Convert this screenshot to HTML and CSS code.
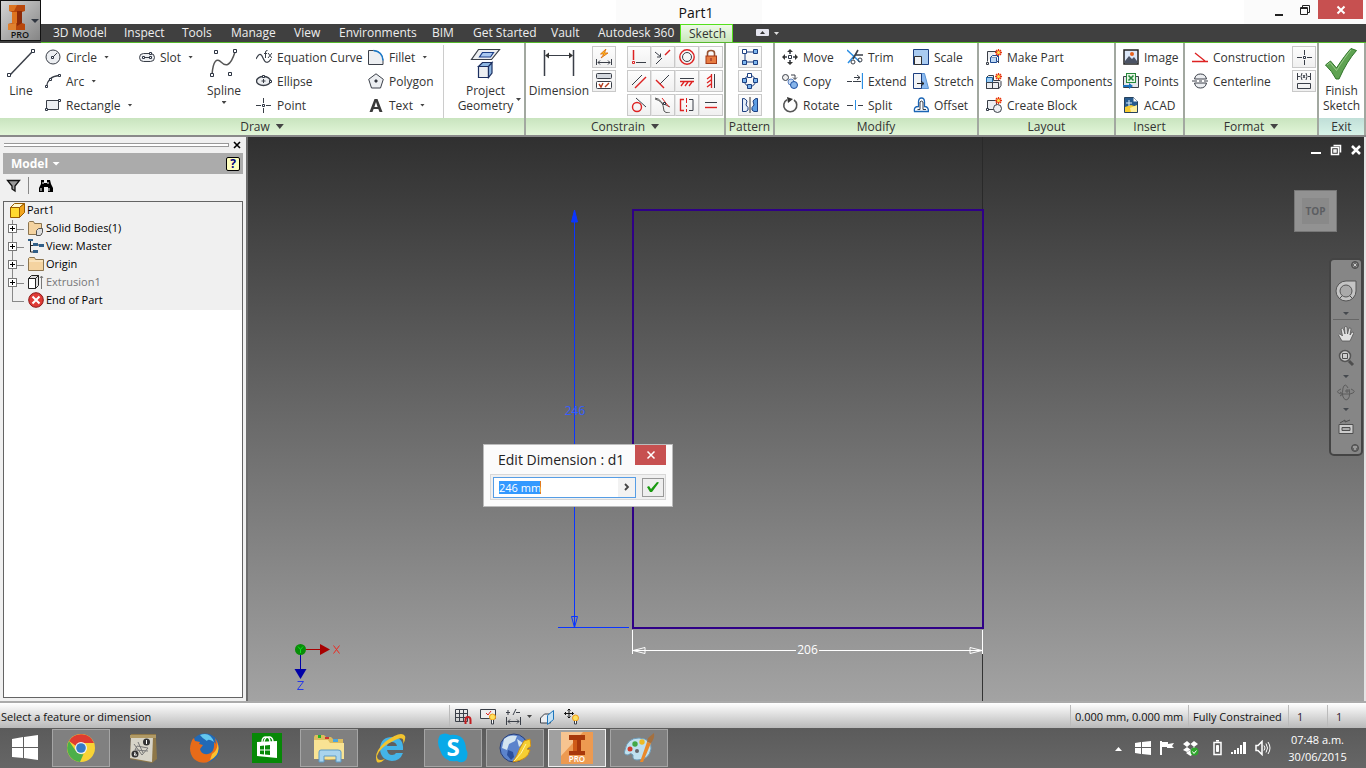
FILE: index.html
```html
<!DOCTYPE html>
<html lang="en">
<head>
<meta charset="utf-8">
<title>Part1</title>
<link rel="stylesheet" href="styles.css">
</head>
<body>
<div class="app">
<header class="top">
  <button class="appbtn" aria-label="Application menu">
    <svg width="39" height="39" viewBox="0 0 39 39"><path d="M8 4h16v6l-3 1v11l3 1v6H7v-6l4-1V11L8 10z" fill="#b8470b"/><path d="M8 4h8l-3 6H8zM11 11h5v11h-5z" fill="#dd7420"/><path d="M16 10h5v12l-5 3z" fill="#8c2a08"/><path d="M7 23l8-1v7H7z" fill="#e0812e"/><path d="M30 18h8l-4 4z" fill="#303640"/><text x="19" y="37" class="pro">PRO</text></svg>
  </button>
  <div class="titlebar">
    <h1 class="title">Part1</h1>
    <div class="winbtns">
      <button aria-label="Minimize"><svg width="12" height="12"><path d="M2 10h8v2H2z" fill="#222"/></svg></button>
      <button aria-label="Restore"><svg width="12" height="12" fill="none" stroke="#222"><path d="M1.500 3.500h7v7h-7zM1 4.500h8M3.500 3v-1.500h7v7H9"/></svg></button>
      <button class="close" aria-label="Close"><svg width="10" height="10"><path d="M1.500 1.500l7 7M8.500 1.500l-7 7" stroke="#fff" stroke-width="2"/></svg></button>
    </div>
  </div>
  <nav class="tabs">
    <a href="#">3D Model</a><a href="#">Inspect</a><a href="#">Tools</a><a href="#">Manage</a><a href="#">View</a><a href="#">Environments</a><a href="#">BIM</a><a href="#">Get Started</a><a href="#">Vault</a><a href="#">Autodesk 360</a><a href="#" class="on">Sketch</a>
    <button class="ribmin" aria-label="Minimize ribbon"><svg width="26" height="8"><rect width="13" height="7" rx="1" fill="#e4e4ee"/><path d="M4 5l2.500-3L9 5z" fill="#333"/><path d="M18 3h5l-2.500 3z" fill="#ddd"/></svg></button>
  </nav>
</header>

<section class="ribbon">
  <div class="panel p-draw">
    <div class="tools">
      <button class="big"><svg class="i" width="32" height="32"><path d="M5 27L27 4" stroke-width="1.500"/><path class="n" d="M2.500 25.500h3v3h-3zM26.500 1.500h3v3h-3z"/></svg><span>Line</span></button>
      <div class="col">
        <button class="tool"><svg class="i g" width="16" height="16"><circle cx="8" cy="8" r="7"/><path d="M8 8l4-4"/><path class="n" d="M6.500 7.500h2v2h-2z"/></svg>Circle<i class="dd"></i></button>
        <button class="tool"><svg class="i" width="16" height="16"><path d="M1.500 14C2 8 6 3 14 2.500" stroke-width="1.500"/><path class="n" d="M.5 12.500h2v2h-2zM4.500 5.500h2v2h-2zM13.500 1.500h2v2h-2z"/></svg>Arc<i class="dd"></i></button>
        <button class="tool"><svg class="i g" width="16" height="16"><path d="M1.500 3.500h12v9h-12z"/><path class="n" d="M.5 11.500h2v2h-2zM13.500 2.500h2v2h-2z"/></svg>Rectangle<i class="dd"></i></button>
      </div>
      <div class="col">
        <button class="tool"><svg class="i g" width="16" height="16"><rect x=".5" y="4.500" width="15" height="8" rx="4"/><path d="M5 8.500h6"/><path class="n" d="M3.500 7.500h2v2h-2zM10.500 7.500h2v2h-2zM10.500 3.500h2v2h-2z"/></svg>Slot<i class="dd"></i></button>
      </div>
      <button class="big"><svg class="i" width="32" height="32"><path d="M4 27C5 12 9 10 13 14s9 6 14-10" stroke="#555" stroke-width="1.500"/><path class="n" d="M2.500 25.500h3v3h-3zM6.500 2.500h3v3h-3zM20.500 24.500h3v3h-3zM25.500 1.500h3v3h-3z"/></svg><span>Spline</span><i class="dd"></i></button>
      <div class="col">
        <button class="tool"><svg class="i" width="16" height="16"><path d="M0 10C3 4 5 4 7 9s5 6 8 1" stroke-width="1.200"/><path d="M9.500 9V3q0-1.500 2-1.500M8 4.500h3M12 4l4 5M16 4l-4 5"/></svg>Equation Curve</button>
        <button class="tool"><svg class="i g" width="16" height="16"><ellipse cx="7.500" cy="8" rx="7" ry="4.500" stroke-width="1.400"/><path d="M5.500 8h4M7.500 6v4"/><path class="n" d="M6.500 2.500h2v2h-2zM13.500 7.500h2v2h-2z"/></svg>Ellipse</button>
        <button class="tool"><svg class="i" width="16" height="16"><path d="M0 8.500h5M10 8.500h5M7.500 1v5M7.500 11v5"/><path class="n" d="M6.500 7.500h2v2h-2z"/></svg>Point</button>
      </div>
      <div class="col">
        <button class="tool"><svg class="i g" width="16" height="16"><path d="M.5 15.500V1.500h5q9 1 9.500 10v4z"/><path d="M5.500 1.500q9 1 9.500 10" stroke="#1b79c9" stroke-width="1.500"/></svg>Fillet<i class="dd"></i></button>
        <button class="tool"><svg class="i g" width="16" height="16"><path d="M8 .8l7.300 5.500-2.800 8.700h-9L.7 6.300z"/><path d="M7 7h2v2H7z" fill="#222"/></svg>Polygon</button>
        <button class="tool"><svg width="16" height="16"><path d="M6.500 2h3L14.500 15h-3l-1.200-3H5.600l-1.100 3h-3zM8 5L6.400 10h3.200z" fill="#3a3a3a" fill-rule="evenodd"/></svg>Text<i class="dd"></i></button>
      </div>
      <button class="big sep"><svg class="i g" width="32" height="32" stroke-width="1.200"><path d="M8.500 1.500h21l-8 10h-20z"/><path d="M12.500 4.500h11l-3 4.500h-11z" fill="#a9c8f0" stroke="#1c3f88"/><path d="M8.500 18.500h10v11h-10z" stroke="#1c2f60"/><path d="M8.500 18.500l4-4h9.500l-3.500 4zM18.500 18.500l3.500-4v10.500l-3.500 4.500z" fill="#8db6e2" stroke="#1c2f60"/></svg><span>Project<br>Geometry</span><i class="dd over"></i></button>
    </div>
    <h2 class="lab">Draw<i class="dl"></i></h2>
  </div>

  <div class="panel p-con">
    <div class="tools">
      <button class="big"><svg class="i" width="32" height="32"><path d="M1.500 2v26M30.500 2v26" stroke-width="1.500"/><path d="M3 7.500h26"/><path d="M2 7.500l4-3v6zM30 7.500l-4-3v6z" fill="#333" stroke="none"/></svg><span>Dimension</span></button>
      <div class="sqs">
        <button class="sq" aria-label="Automatic dimension"><svg class="i" width="16" height="16"><path d="M10 0L4.500 5H8L5 9l7-5H8.500z" fill="#ffbe21" stroke="#d9650b" stroke-width=".8"/><path d="M.5 10v6M15.500 10v6M2 13.500h12M4 11.500l-2 2 2 2M12 11.500l2 2-2 2"/></svg></button>
        <button class="sq" aria-label="Show constraints"><svg class="i" width="16" height="16"><rect x=".5" y=".5" width="15" height="5" rx="1" fill="#d5d9df"/><rect x=".5" y="8.500" width="15" height="7" rx="1" fill="#fff"/><path d="M3 11l2 3 2-4M9 14l4-4" stroke="#b43c1c" stroke-width="1.400"/></svg></button>
      </div>
      <div class="sqs three joined">
        <button class="sq" aria-label="Perpendicular"><svg class="i" width="16" height="16"><path d="M2.500 1v10" stroke="#d22" stroke-width="1.500"/><path d="M1.500 12.500h2v2h-2z" stroke="#d22"/><path d="M5 13.500h10"/></svg></button>
        <button class="sq" aria-label="Coincident"><svg class="i" width="16" height="16"><path d="M10 6l5-5" stroke="#d22" stroke-width="1.400"/><path d="M1 15l6-6M0 3l6 5M5.500 4.500V8H2"/></svg></button>
        <button class="sq" aria-label="Concentric"><svg class="i" width="16" height="16"><circle cx="8" cy="8" r="7.200" stroke="#d22" stroke-width="1.400"/><circle cx="8" cy="8" r="4.500"/></svg></button>
        <button class="sq" aria-label="Fix"><svg class="i" width="16" height="16"><path d="M4.500 8V4q0-2.500 3.500-2.500T11.500 4v4" stroke="#955232" stroke-width="1.600"/><rect x="3" y="7" width="10.500" height="7.500" fill="#e67c42" stroke="#a53917"/><path d="M8 9v3" stroke="#822"/></svg></button>
        <button class="sq" aria-label="Parallel"><svg class="i" width="16" height="16"><path d="M1 12L11 2"/><path d="M4 15L15 4" stroke="#d22" stroke-width="1.400"/></svg></button>
        <button class="sq" aria-label="Square to line"><svg class="i" width="16" height="16"><path d="M5 11l9-9"/><path d="M1 7l8 8" stroke="#d22" stroke-width="1.400"/></svg></button>
        <button class="sq" aria-label="Horizontal"><svg class="i" width="16" height="16"><path d="M1 5.500h14"/><path d="M1 8.500h14M5 9l-3 4M9 9l-3 4M13 9l-3 4" stroke="#d22" stroke-width="1.300"/></svg></button>
        <button class="sq" aria-label="Vertical"><svg class="i" width="16" height="16"><path d="M11.500 1v14"/><path d="M8.500 1v14M8 3L4 6M8 7l-4 3M8 11l-4 3" stroke="#d22" stroke-width="1.300"/></svg></button>
        <button class="sq" aria-label="Tangent"><svg class="i" width="16" height="16"><circle cx="6" cy="10" r="4.500" stroke="#d22" stroke-width="1.400"/><path d="M5 1l10 9"/></svg></button>
        <button class="sq" aria-label="Smooth"><svg class="i" width="16" height="16"><path d="M0 1q8 1 9 13 1 2 6 2M0 2q4 1 7 4l8 4" stroke="#555"/><path d="M7 1l7 9" stroke="#d22"/><path class="n" d="M8.500 5.500h2v2h-2z"/></svg></button>
        <button class="sq" aria-label="Symmetric"><svg class="i" width="16" height="16"><path d="M5 2.500H1.500v11H5" stroke="#d22" stroke-width="1.400"/><path d="M7.500 1v5M7.500 8v2M7.500 12v3" stroke="#d22"/><path d="M10 2.500h4v11h-4"/></svg></button>
        <button class="sq" aria-label="Equal"><svg class="i" width="16" height="16"><path d="M2 5.500h12"/><path d="M2 10.500h12" stroke="#d22" stroke-width="1.400"/></svg></button>
      </div>
    </div>
    <h2 class="lab">Constrain<i class="dl"></i></h2>
  </div>

  <div class="panel p-pat">
    <div class="tools">
      <div class="sqs">
        <button class="sq" aria-label="Rectangular pattern"><svg class="i b" width="16" height="16"><path d="M3 3h10M3 3v10M3 13h10"/><path d="M.5 .5h4v4h-4z" fill="#fff"/><path d="M11.500 .5h4v4h-4zM.5 11.500h4v4h-4zM11.500 11.500h4v4h-4z" fill="#7db6ee"/></svg></button>
        <button class="sq" aria-label="Circular pattern"><svg class="i b" width="16" height="16"><circle cx="8" cy="8" r="5.500"/><path d="M5.500 .5h4v4h-4z" fill="#fff"/><path d="M.5 5.500h4v4h-4zM11.500 5.500h4v4h-4zM5.500 11.500h4v4h-4z" fill="#7db6ee"/></svg></button>
        <button class="sq" aria-label="Mirror"><svg class="i b" width="16" height="16"><path d="M.5 1.500v13H4q3-1 2-4L4 8l1-4q-2-3-4-2.500z" fill="#e5eef8"/><path d="M8 0v16" stroke="#333"/><path d="M15.500 1.500v13H12q-3-1-2-4L12 8l-1-4q2-3 4-2.500z" fill="#5d9ee4"/></svg></button>
      </div>
    </div>
    <h2 class="lab">Pattern</h2>
  </div>

  <div class="panel p-mod">
    <div class="tools">
      <div class="col">
        <button class="tool"><svg class="i" width="16" height="16"><path d="M8 2v3M8 11v3M2 8h3M11 8h3" stroke-width="1.600"/><path d="M8 0l3 3H5zM8 16l3-3H5zM0 8l3-3v6zM16 8l-3-3v6z" fill="#333" stroke="none"/><path class="n" d="M6.500 6.500h3v3h-3z"/></svg>Move</button>
        <button class="tool"><svg class="i" width="16" height="16"><circle cx="3.500" cy="4.500" r="3" fill="#eee"/><path d="M9 2h4v4M11 4.500l2 2 2-2"/><circle cx="9" cy="9" r="3" fill="#c9dcf4" stroke="#5f83c1"/><circle cx="12" cy="12" r="3.500" fill="#86b4ea" stroke="#1e50a0"/></svg>Copy</button>
        <button class="tool"><svg class="i" width="16" height="16"><path d="M12 3a6.500 6.500 0 1 1-7-.3" stroke="#555" stroke-width="1.600"/><path d="M5 0l6 2-5 4z" fill="#333" stroke="none"/></svg>Rotate</button>
      </div>
      <div class="col">
        <button class="tool"><svg class="i" width="16" height="16"><path d="M0 1l13 12M1 14L8 6" stroke="#2a8ee4" stroke-width="1.500"/><path d="M11 1L6 10M8 6h8" stroke-width="1.600"/><circle cx="6" cy="13" r="2"/><circle cx="13" cy="11" r="2"/></svg>Trim</button>
        <button class="tool"><svg class="i" width="16" height="16"><path d="M0 8.500h5M6 8.500h8M7 4.500h6M10 2l3 2.500L10 7"/><path d="M15.500 0v16" stroke="#2a8ee4" stroke-width="1.300"/></svg>Extend</button>
        <button class="tool"><svg class="i" width="16" height="16"><path d="M0 8.500h6M11 8.500h5"/><path d="M8.500 3v10" stroke="#2a8ee4"/></svg>Split</button>
      </div>
      <div class="col">
        <button class="tool"><svg class="i b" width="16" height="16"><path d="M.5 .5h15v15H.5z" fill="#a9cbf1"/><path d="M1.500 7.500h7v8h-7z" fill="#f1f3f6" stroke="#333"/></svg>Scale</button>
        <button class="tool"><svg class="i b" width="16" height="16"><path d="M8 .5h3.500l4 15H8z" fill="#8bbaf0" stroke="#5c95d4"/><path d="M.5 .5h8v15h-8z" fill="#f1f3f6"/><path d="M4 10.500h7M8 8l3 2.500L8 13" stroke="#222"/></svg>Stretch</button>
        <button class="tool"><svg class="i" width="16" height="16"><path d="M1.500 14.500q-1-5 4-5V5q0-4 3-4t3 4v4.500q4 0 4 5z" stroke="#1b65b5" stroke-width="1.300"/><path d="M4.500 12.500H7V5q1-2 3 0v7.500h3"/></svg>Offset</button>
      </div>
    </div>
    <h2 class="lab">Modify</h2>
  </div>

  <div class="panel p-lay">
    <div class="tools">
      <div class="col">
        <button class="tool"><svg class="i g" width="16" height="16"><path d="M1.500 12.500v-10h9M.5 15.500h2v-2h-2zM12.500 8v6"/><path d="M4.500 8.500h6v5h-6z" fill="#bdd7f3" stroke="#1b4891"/><path d="M4.500 8.500l2-2h6l-2 2M12.500 6.500v5l-2 2" stroke="#1b4891"/><path d="M12.500 0v7M9 3.500h7M10 1l5 5M15 1l-5 5" stroke="#e73711" stroke-width="1.300"/><circle cx="12.500" cy="3.500" r="1.500" fill="#ffe14d" stroke="none"/></svg>Make Part</button>
        <button class="tool"><svg class="i g" width="16" height="16"><path d="M.5 4.500l2-2h5v5H14l1 1v4l-2 3H.5z"/><path d="M.5 4.500h6v5h-6z" fill="#9acbf4" stroke="#1b65a5"/><path d="M.5 9.500h6v6h-6zM6.500 9.500h6v6h-6z"/><path d="M12.500 0v7M9 3.500h7M10 1l5 5M15 1l-5 5" stroke="#e73711" stroke-width="1.300"/><circle cx="12.500" cy="3.500" r="1.500" fill="#ffe14d" stroke="none"/></svg>Make Components</button>
        <button class="tool"><svg class="i g" width="16" height="16"><path d="M1.500 3.500h9v9h-9z"/><circle cx="11.500" cy="11.500" r="4"/><path class="n" d="M.5 11.500h2v2h-2z"/><path d="M12.500 0v7M9 3.500h7M10 1l5 5M15 1l-5 5" stroke="#e73711" stroke-width="1.300"/><circle cx="12.500" cy="3.500" r="1.500" fill="#ffe14d" stroke="none"/></svg>Create Block</button>
      </div>
    </div>
    <h2 class="lab">Layout</h2>
  </div>

  <div class="panel p-ins">
    <div class="tools">
      <div class="col">
        <button class="tool"><svg width="16" height="16"><rect x="1" y="1" width="14" height="14" fill="#dce7f8" stroke="#222" stroke-width="1.500"/><path d="M2 12l4-5 3 3 2-2 3 4v2H2z" fill="#4b5365"/><circle cx="9" cy="5" r="2" fill="#e8611e"/></svg>Image</button>
        <button class="tool"><svg class="i" width="16" height="16"><path d="M3 3.500H.5v11h15v-11H13" fill="#e3e6ea"/><rect x="3.500" y=".5" width="9" height="9" fill="#e7f5e5" stroke="#25873b"/><path d="M5.500 2.500l5 5M10.500 2.500l-5 5" stroke="#25873b" stroke-width="1.600"/><path d="M0 12h6v-2l4 3-4 3v-2H0z" fill="#1a72bf" stroke="none"/></svg>Points</button>
        <button class="tool"><svg width="16" height="16"><path d="M1.500 .5h9l4 4v11h-13z" fill="#285b8e" stroke="#26415c"/><path d="M10.500 .5v4h4z" fill="#fff"/><path d="M2 10l6-2 6 2v5H2z" fill="#f6cc32"/><path d="M7 11l7-3v7H8z" fill="#fff09c"/><path d="M6 3v6M3 6h6" stroke="#d6efff"/></svg>ACAD</button>
      </div>
    </div>
    <h2 class="lab">Insert</h2>
  </div>

  <div class="panel p-for">
    <div class="tools">
      <div class="col">
        <button class="tool"><svg class="i" width="16" height="16"><path d="M0 12.500h16M3 4l10 8" stroke="#d22" stroke-width="1.300"/></svg>Construction</button>
        <button class="tool"><svg class="i g" width="16" height="16"><path d="M2.500 6q1-5 6-5t6 5zM2.500 10q1 5 6 5t6-5z"/><path d="M0 8h5M7 8h3M12 8h4"/></svg>Centerline</button>
      </div>
      <div class="sqs">
        <button class="sq" aria-label="Center point"><svg class="i" width="16" height="16"><path d="M1 8.500h5M11 8.500h5M8.500 1v5M8.500 11v5"/><path class="n" d="M7.500 7.500h2v2h-2z"/></svg></button>
        <button class="sq" aria-label="Driven dimension"><svg class="i" width="16" height="16"><path d="M1.500 0v7M14.500 0v7M1 3.500h3M12 3.500h3M6 0q-2 3.500 0 7M10 0q2 3.500 0 7M7 2l2 3M9 2L7 5M1.500 10.500h13v5h-13z"/></svg></button>
      </div>
    </div>
    <h2 class="lab">Format<i class="dl"></i></h2>
  </div>

  <div class="panel p-exit">
    <div class="tools">
      <button class="big"><svg width="32" height="32"><path d="M.5 17l5-4 6 7Q20 7 26 .5l5.500 2Q22 13 14 31H11Q7 23 .5 17z" fill="#5fa352" stroke="#2f7529"/><path d="M2 17l3-2.500 6.500 8Q20 9 26 2" fill="none" stroke="#9aca8a"/></svg><span>Finish<br>Sketch</span></button>
    </div>
    <h2 class="lab">Exit</h2>
  </div>
</section>

<main class="work">
  <aside class="browser">
    <div class="grip"><i></i><button aria-label="Close panel"><svg width="8" height="8"><path d="M1 1l6 6M7 1L1 7" stroke="#000" stroke-width="1.600"/></svg></button></div>
    <div class="mhead"><button class="mname">Model<i></i></button><button class="help" aria-label="Help">?</button></div>
    <div class="mtools">
      <button aria-label="Filter"><svg width="16" height="14"><path d="M1.500 1.500h12L9 7v5l-3-2V7z" fill="#999" stroke="#111" stroke-width="1.300"/></svg></button>
      <button class="find" aria-label="Find"><svg width="16" height="14"><path d="M3 1h3v3h3V1h3l1 4 2 4v4h-5V8H6v5H1V9l2-4z"/><path d="M3 9v3M11 9v3M5 3v2M10 3v2" stroke="#fff"/></svg></button>
    </div>
    <div class="tree">
      <ul>
        <li><svg width="16" height="16"><path d="M1.500 5.500h9v10h-9z" fill="#ffd92f" stroke="#985b00"/><path d="M1.500 5.500l4-4h10l-5 4z" fill="#fff8cf" stroke="#985b00"/><path d="M10.500 5.500l5-4v9l-5 5z" fill="#f2a51e" stroke="#985b00"/></svg>Part1</li>
        <li class="sub"><b class="ex"></b><svg width="16" height="16"><path d="M.5 14.500v-12l1-1h4l1 2h7v11z" fill="#f4d3a0" stroke="#8b744f"/><path d="M8.500 10.500l2-2h4v4l-2 3h-4z" fill="#ddd" stroke="#555"/></svg>Solid Bodies(1)</li>
        <li class="sub"><b class="ex"></b><svg width="16" height="16"><path d="M2.500 3v11h3M3 7.500h3M8 7h3" fill="none" stroke="#222"/><path d="M0 1h5v2H0zM5 5h5v3H5zM11 6h5v3h-5zM5 12h5v3H5z" fill="#315f88"/></svg>View: Master</li>
        <li class="sub"><b class="ex"></b><svg width="16" height="16"><path d="M.5 14.500v-12l1-1h5l1 2h8v11z" fill="#f4d3a0" stroke="#8b744f"/><path d="M1 5h14" stroke="#fff2d6"/></svg>Origin</li>
        <li class="sub dim"><b class="ex"></b><svg width="16" height="16" fill="#fff" stroke="#222"><path d="M.5 4.500h7v10h-7z"/><path d="M.5 4.500l3-3h7l-3 3zM7.500 4.500l3-3v10l-3 3z" fill="#ddd"/><path d="M13.500 15V2M12 4l1.500-2L15 4" stroke="#777"/></svg>Extrusion1</li>
        <li class="sub last"><svg width="16" height="16"><circle cx="8" cy="8" r="7.300" fill="#df3b36" stroke="#8d1616"/><path d="M4.500 4.500l7 7M11.500 4.500l-7 7" stroke="#fff" stroke-width="2"/></svg>End of Part</li>
      </ul>
    </div>
  </aside>

  <section class="view">
    <svg class="scene" viewBox="0 0 1116 564" preserveAspectRatio="xMidYMid meet" fill="none">
      <path d="M734.500 0v73" stroke="#292929"/><path d="M734.500 517v47" stroke="#333"/>
      <path d="M385 73h350v418H385z" stroke="#2f0087" stroke-width="2"/>
      <path d="M326.500 73v418M310 490.500h71" stroke="#0a35ff"/>
      <path d="M323.500 479.500h6l-3 11z" stroke="#0a35ff"/><path d="M326.500 73l-3 12h6z" stroke="#0a35ff" fill="#0a35ff"/>
      <text x="327" y="278" class="dimtext" fill="#345dff">246</text>
      <path d="M384.500 493v24M734.500 493v24M385 513.500h163M571 513.500h163M385 513.500l12-3v6zM734 513.500l-12-3v6z" stroke="#fff"/>
      <text x="559.500" y="517" class="dimtext" fill="#fff">206</text>
      <path d="M58 512.500h14" stroke="#a80000"/><path d="M72 507l10 5.500-10 5.500z" fill="#a80000"/>
      <path d="M52.500 518v15" stroke="#0000a8"/><path d="M46.500 532h12l-6 10z" fill="#0000a8"/>
      <circle cx="52.500" cy="512.500" r="5.500" fill="#078e07"/><path d="M50 509.500l2.500 3 2.500-3M52.500 512v4" stroke="#0ee021"/>
      <path d="M85.500 508.500l6 8M91.500 508.500l-6 8" stroke="#ee281e"/><path d="M49.500 544.500h6l-6 8h6" stroke="#2638e8"/>
    </svg>
    <div class="docbtns">
      <button aria-label="Minimize document"><svg width="12" height="12"><path d="M1 8h10v2H1z" fill="#fff"/></svg></button>
      <button aria-label="Restore document"><svg width="12" height="12" fill="none" stroke="#fff" stroke-width="1.500"><path d="M1.500 3.500h7v7h-7zM3.500 1.500h7v7M4 6h2v2H4z"/></svg></button>
      <button aria-label="Close document"><svg width="12" height="12"><path d="M2 2l8 8M10 2l-8 8" stroke="#fff" stroke-width="2.500"/></svg></button>
    </div>
    <button class="cube"><span>TOP</span></button>
    <div class="navbar">
      <svg viewBox="1 1 30 194" width="30" height="194" fill="none" stroke="#4e4e4e">
        <circle cx="25" cy="6" r="3.500" fill="#666"/><path d="M23.500 4.500l3 3M26.500 4.500l-3 3" stroke="#ccc"/>
        <path d="M16 22h10v10a10 10 0 1 1-10-10z" fill="#c4c4c4" stroke="#555"/><circle cx="16" cy="32" r="6" fill="#aaa" stroke="#555"/><path d="M12 37l-2 2M20 37l2 2"/>
        <path d="M13 53h6l-3 3zM13 116h6l-3 3zM13 149h6l-3 3z" fill="#45494e" stroke="none"/><path d="M3 60.500h26" stroke="#666"/>
        <path d="M12 82L8.500 76q1-2 3 0l1 1-1.500-7q1.500-1.500 2.500 0l1.500 5-.500-7q1.500-1 2.500 0l.500 7 1.500-6q2-.5 2 1l-1 6 2-3q2 0 1.500 1.500L20 82z" fill="#e0e0e0" stroke="#555" stroke-width=".8"/>
        <circle cx="15" cy="97" r="5.500" fill="#ccc" stroke="#555" stroke-width="1.500"/><path d="M12.500 94.500h5v5h-5z"/><path d="M19 102l4 4" stroke-width="3"/>
        <path d="M13 129q2-6 5 0M19 130q2 10-3 11-5-2-3-12M11 130q-7 3 0 5h9q8-2 1-5M10 137l3-2-3-2M15 132h5M17 130v4" stroke="#5c5c5c"/>
        <path d="M9 165.500h14v9H9z" fill="#ccc"/><path d="M12 168.500h8v3h-8z" fill="#aaa"/><path d="M10 164l5-3v2l5-2"/>
        <circle cx="25" cy="189" r="3.500" fill="#666"/><path d="M23 188h4M24 190h2" stroke="#ccc"/>
      </svg>
    </div>
    <form class="dialog">
      <div class="dtitle"><label for="dim">Edit Dimension : d1</label><button type="button" class="dclose" aria-label="Close"><svg width="10" height="10"><path d="M1.500 1.500l7 7M8.500 1.500l-7 7" stroke="#fff" stroke-width="1.500"/></svg></button></div>
      <div class="dbody">
        <div class="field"><input id="dim" type="text" value="246 mm"><button type="button" aria-label="More"><svg width="8" height="8"><path d="M2 1l3 3-3 3" fill="none" stroke="#444" stroke-width="1.800"/></svg></button></div>
        <button type="button" class="ok" aria-label="Accept"><svg width="12" height="12"><path d="M0 6l2-1 2 3 6-7 2 .5L5 11H3z" fill="#199a10"/></svg></button>
      </div>
    </form>
  </section>
</main>

<footer class="status">
  <span class="hint">Select a feature or dimension</span>
  <div class="sicons">
    <button aria-label="Snap to grid"><svg class="i" width="18" height="16"><path d="M.5 .5h12v12H.5zM4.500 .5v12M8.500 .5v12M.5 4.500h12M.5 8.500h12"/><path d="M10.500 15v-4q0-3 2.500-3t2.500 3v4" stroke="#c31d20" stroke-width="2"/></svg></button>
    <button aria-label="Show all constraints"><svg class="i" width="18" height="16"><path d="M.5 .5h15v9H.5z" fill="#eee"/><path d="M6 4l2 2 3-4" stroke="#d22"/><circle cx="12.500" cy="8" r="3" fill="#ffe15c" stroke="#ef9a1a"/><path d="M11.500 11v4h2v-4" fill="#fff"/></svg></button>
    <button aria-label="Relax mode"><svg class="i" width="18" height="16"><path d="M1 3.500h4M3 1v5M8 6l3-6M11 3.500h4M1.500 8v8M15.500 8v8M3 12.500h11M5 10.500l-2 2 2 2M12 10.500l2 2-2 2"/></svg><i class="dd"></i></button>
    <button aria-label="Slice graphics"><svg class="i g" width="18" height="16"><path d="M1.500 9l4-4h6v9h-10z"/><path d="M8.500 6.500l6-5v9l-6 5z" stroke="#1d76bc" fill="#c5e2f5"/></svg></button>
    <button aria-label="Degrees of freedom"><svg class="i" width="18" height="16"><path d="M5 0v9M.5 4.500h9M3.500 1.500L5 0l1.500 1.500M3.500 7.500L5 9l1.500-1.500M2 3L.5 4.500 2 6M8 3l1.500 1.500L8 6" stroke="#111"/><circle cx="11.500" cy="9" r="3" fill="#ffe15c" stroke="#ef9a1a"/><path d="M10.500 12v3h2v-3" fill="#fff"/></svg></button>
  </div>
  <span class="coords">0.000 mm, 0.000 mm</span><span class="state">Fully Constrained</span><span class="one">1</span><span class="one">1</span>
</footer>

<footer class="taskbar">
  <button class="start" aria-label="Start"><svg width="28" height="26"><path d="M1 4l11-2v10H1zM13 2l14-2v12H13zM1 13h11v10L1 22zM13 13h14v12l-14-2z" fill="#fff"/></svg></button>
  <div class="tasks">
    <button class="task run" aria-label="Chrome"><svg width="30" height="30"><circle cx="15" cy="15" r="14" fill="#f8d335"/><path d="M3 8a14 14 0 0 1 25 2H15a6 6 0 0 0-5 3z" fill="#df3c30"/><path d="M3 8l6.500 9.500q3 4.500 8 3.500L14 29A14 14 0 0 1 3 8z" fill="#4caf49"/><circle cx="15" cy="15" r="6" fill="#eef3f8"/><circle cx="15" cy="15" r="4.800" fill="#347bc8"/></svg></button>
    <button class="task" aria-label="Journal"><svg width="30" height="30"><path d="M3 1h25v5l1 20-5 4-22-4z" fill="#8e7748"/><path d="M3 4h22l-1 25-22-4z" fill="#d7d4c8"/><path d="M2 2h26v3H2z" fill="#b19a65"/><circle cx="18.500" cy="9" r="3.500" fill="#333"/><circle cx="7" cy="21" r="3.500" fill="#333"/><path d="M6 11l8 11 6-7-11-2-2 4 13 1M10 9l5 11" fill="none" stroke="#777"/><path d="M18.500 7v4M6 20q2-1 1 1l-1 1h3" stroke="#fff" fill="none"/></svg></button>
    <button class="task" aria-label="Firefox"><svg width="30" height="30"><circle cx="15" cy="15" r="14.500" fill="#2169b6"/><path d="M10 2q10-4 14 7-6-4-7-1-5-3-7-6z" fill="#63c7ee"/><path d="M1 10Q2 6 4 5l1 3 5 1-1 2 4 1-3 4q1 6 8 5 7-1 6-12l2 2-1-6q7 11 0 18-9 12-21 3Q-2 19 1 10z" fill="#e76b18"/><path d="M22 21q7-5 5-13 5 14-7 19z" fill="#f9c231"/></svg></button>
    <button class="task" aria-label="Store"><svg width="30" height="30"><path d="M0 0h30v30H0z" fill="#078807"/><path d="M5 9l20-1v17L5 23z" fill="#fff"/><path d="M10 9q0-5 4-5t4 5M12 9q1-6 6-5 3 1 3 5" fill="none" stroke="#fff" stroke-width="1.400"/><path d="M8 13l4-.5v4H8zM13 12.500l5-.5v4.500h-5zM8 17.500h4v4l-4-.5zM13 17.500h5V22l-5-.5z" fill="#078807"/></svg></button>
    <button class="task run" aria-label="File Explorer"><svg width="32" height="30"><path d="M1 4l1-2h9l2 2h5l2 2h10v19q-14 4-29 0z" fill="#dcbb5e"/><path d="M1 7h14l2 3h14v16H1z" fill="#f8e394"/><path d="M5 2h3v3H5z" fill="#23b423"/><path d="M12 4h4v2h-4z" fill="#cf342e"/><path d="M20 6h5v3h-5z" fill="#4ba7df"/><path d="M6 29V19q0-2 2-2h17q3 0 3 2v10h-5v-6H11v6z" fill="#a9d4ee" stroke="#5c9ac5"/></svg></button>
    <button class="task" aria-label="Internet Explorer"><svg width="32" height="30"><path d="M28 17H12q1 5 5 5 3 0 4-2h7q-3 8-11 8-12-1-12-13Q6 4 17 4q12 0 11 13zM12 13h10q-1-4-5-4t-5 4z" fill="#44b4e8" fill-rule="evenodd"/><path d="M2 29Q-2 20 10 9 26-3 30 3q1 3-2 8 2-9-8-4Q5 14 2 23q0 6 8 3-5 5-8 3z" fill="#f2c42f"/></svg></button>
    <button class="task run" aria-label="Skype"><svg width="30" height="36" viewBox="0 -3 30 36"><path d="M2 2q5-3 10 0 15-2 16 14 3 5 0 11-4 4-9 1Q6 30 2 17-2 8 2 2z" fill="#08a9e8"/><text x="15" y="23" class="sk">S</text></svg></button>
    <button class="task run" aria-label="Web browser"><svg width="32" height="30"><circle cx="15" cy="15" r="14" fill="#5b83cc" stroke="#263d78"/><path d="M5 6q6-5 13-3l-2 5-6 3-2 6-5-2zM18 6l6 4-4 4z" fill="#d3e4f0"/><path d="M9 17l5 2 1 5-3 3-4-5z" fill="#2b4f9c"/><path d="M31 6l-6 2-4 7-3 7-4 7q15-2 17-12l-3-1 4-3z" fill="#f6cf32" stroke="#cc8d16"/><path d="M15 28q8-7 12-17" stroke="#fff5ac" fill="none"/></svg></button>
    <button class="task run active" aria-label="Inventor"><svg width="32" height="32"><path d="M0 0h32v32H0z" fill="#ed9a51"/><path d="M0 0h22L0 24z" fill="#f7c490"/><path d="M8 3h16v5h-4v11h4v4H8v-4h4V8H8z" fill="#a8380b"/><path d="M12 8h4v11h-4z" fill="#cf5b18"/><text x="16" y="30" class="prow">PRO</text></svg></button>
    <button class="task run" aria-label="Paint"><svg width="32" height="30"><path d="M2 17Q4 5 16 5q13 1 12 11-2 11-14 11-5 0-4-5-2-3-5 0-5 0-3-5z" fill="#bfe0ef" stroke="#6e9bb7"/><circle cx="7" cy="16" r="2.500" fill="#d23d2d"/><circle cx="12" cy="11" r="2.700" fill="#43a848"/><circle cx="19" cy="9" r="2.700" fill="#ecbb25"/><circle cx="14" cy="18" r="2" fill="#64666c"/><path d="M17 29l7-20 4 1-8 19z" fill="#e9892b"/><path d="M24 9l1-4 6-5q1 5-3 10z" fill="#a4703f"/></svg></button>
  </div>
  <div class="tray">
    <svg width="16" height="16"><path d="M4 11h7L7.500 7z" fill="#fff"/></svg>
    <svg width="16" height="16"><path d="M0 3l6-1v5H0zM7 2l9-1v6H7zM0 8h6v6l-6-1zM7 8h9v7l-9-1z" fill="#fff"/></svg>
    <svg width="16" height="16"><path d="M1 1h2v14H1zM3 2h6v2l6-1-2 3 2 2H8V7H3z" fill="#fff"/></svg>
    <svg width="16" height="16"><path d="M4 1L0 4l4 3 3.500-3zM11 1l-3.500 3L11 7l4-3zM4 7L0 10l4 2 3.500-2.500zM11 7L7.500 9.500 11 12l4-2zM7.500 10L3 13l4.500 3 4-3z" fill="#fff"/><circle cx="11.500" cy="11.500" r="4" fill="#2fa52d"/><path d="M9.500 11.500l1.500 2 2.500-3" stroke="#fff" fill="none"/></svg>
    <svg width="16" height="16" fill="none" stroke="#fff"><path d="M7 2.500h7v12H7zM9 .8h3" stroke-width="1.500"/><path d="M9.500 5.500h2v6h-2z" fill="#fff"/></svg>
    <svg width="16" height="16"><path d="M0 12h2v2H0zM3 10h2v4H3zM6 8h2v6H6zM9 5h2v9H9zM12 2h3v12h-3z" fill="#fff"/></svg>
    <svg width="16" height="16" fill="none" stroke="#fff"><path d="M1 5.500h2l4-4v13l-4-4H1z" stroke-width="1.500"/><path d="M9 5.500q2 2.500 0 5M11 3.500q3 4.500 0 9M13 2q4 6 0 12"/></svg>
    <time class="clock">07:48 a.m.<br>30/06/2015</time>
  </div>
</footer>
</div>
</body>
</html>
```
FILE: styles.css
```css
* { box-sizing: border-box; }
body { margin: 0; font-family: "Open Sans", "Noto Sans", sans-serif; font-size: 12px; color: #333; }
button { font: inherit; color: inherit; border: 0; background: none; padding: 0; margin: 0; white-space: nowrap; }
a { color: inherit; text-decoration: none; }
svg { display: block; flex: none; }
.app { display: flex; flex-direction: column; min-height: 100vh; overflow: hidden; background: #fff; }

/* title bar and tabs */
.top { display: grid; grid-template-columns: 41px 1fr; grid-template-rows: 24px 19px; background: #404040; }
.appbtn { grid-row: 1 / 3; height: 41px; border: 1px solid #111; background: linear-gradient(135deg, #d5d5d5, #858585); }
.pro, .prow { font: 600 9px "Open Sans", sans-serif; text-anchor: middle; fill: #111; }
.prow { font-size: 8px; fill: #fff; }
.titlebar { display: grid; grid-template-columns: 575fr auto 604fr; background: #fff; }
.title { margin: 0; grid-column: 2; padding: 0 49px 0 63px; font-size: 14px; font-weight: 400; line-height: 25px; color: #111; background: #fbfbfb; }
.winbtns { justify-self: end; display: flex; align-items: flex-start; background: #fbfbfb; padding: 0 3px 0 22px; }
.winbtns button { width: 26px; height: 19px; display: grid; place-items: center; }
.winbtns .close { width: 45px; background: #c75050; }
.tabs { display: grid; grid-template-columns: 71px 58px 49px 63px 45px 93px 41px 78px 47px 94px 53px auto; justify-content: start; background: #404040; color: #eee; border-bottom: 1px solid #55b82c; line-height: 17px; }
.tabs a { padding-left: 12px; white-space: nowrap; }
.tabs .on { padding-left: 8px; background: linear-gradient(#eef9e8, #c9e6bb); color: #333; border: 1px solid #55e01c; border-bottom: 0; }
.ribmin { padding: 0 23px; }

/* ribbon */
.ribbon { display: flex; height: 94px; border-bottom: 2px solid #8a8a8a; background: #fff; }
.panel { display: flex; flex-direction: column; min-width: 0; flex: 1 1 0; border-right: 2px solid #a2a8a0; }
.p-draw { flex-grow: 524; }
.p-con { flex-grow: 198; }
.p-pat { flex-grow: 47; }
.p-mod { flex-grow: 202; }
.p-lay { flex-grow: 135; }
.p-ins { flex-grow: 67; }
.p-for { flex-grow: 132; }
.p-exit { flex-grow: 45; }
.tools { flex: 1; display: grid; justify-content: start; padding-top: 2px; }
.lab { margin: 0; height: 17px; display: flex; align-items: center; justify-content: center; font-size: 12px; font-weight: 400; line-height: 17px; background: linear-gradient(#c9e4bf, #e2f6d8); }
.p-exit .lab { background: linear-gradient(#c0dfd8, #d8f3e8); }
.p-draw .tools { grid-template-columns: 42px 94px 64px 53px 112px 75px 84px; padding-left: 3px; }
.p-con .tools { grid-template-columns: 66px 35px 97px; }
.p-pat .tools { justify-content: center; }
.p-mod .tools { grid-template-columns: 65px 66px 70px; padding-left: 7px; }
.p-lay .tools, .p-ins .tools { padding-left: 7px; }
.p-for .tools { grid-template-columns: 100px 24px; padding-left: 7px; }
.p-exit .tools { justify-content: center; }
.col { display: grid; grid-auto-rows: 24px; align-content: start; }
.tool { display: flex; align-items: center; gap: 5px; text-align: left; }
.dd { width: 5px; height: 3px; background: #444; clip-path: polygon(0 0, 100% 0, 50% 100%); margin-left: 2px; }
.dl { width: 8px; height: 5px; background: #444; clip-path: polygon(0 0, 100% 0, 50% 100%); margin-left: 6px; }
.big { display: flex; flex-direction: column; align-items: center; line-height: 15px; padding-top: 3px; position: relative; justify-self: start; min-width: 36px; }
.big span { margin-top: 3px; }
.big .dd { margin: 3px 0 0; }
.p-draw .big:nth-child(4) { width: 42px; }
.sep { width: 84px; border-left: 1px solid #ccc; }
.big .over { position: absolute; right: 6px; bottom: 17px; }
.p-con .big { width: 66px; }
.sqs { display: grid; grid-template-columns: 24px; grid-auto-rows: 22px; row-gap: 2px; padding-top: 1px; align-content: start; }
.three { grid-template-columns: repeat(4, 24px); }
.sq { border: 1px solid #c9c9c9; background: linear-gradient(#fdfdfd, #f0f0f0); display: grid; place-items: center; }
.joined .sq + .sq:not(:nth-child(4n + 1)) { border-left-color: #e4e4e4; }
.i { fill: none; stroke: #3a3f48; }
.i.g { fill: #eceef1; }
.i.b { stroke: #1c3f80; }
.i .n { fill: #fff; stroke: #2d3442; stroke-width: 1; }

/* model browser */
.work { flex: 1; display: grid; grid-template-columns: 248px 1fr; }
.browser { display: flex; flex-direction: column; background: #f0f0f0; border-right: 2px solid #6d6d6d; padding: 0 3px 3px; }
.grip { display: flex; height: 16px; align-items: center; gap: 4px; }
.grip i { flex: 1; height: 4px; border: 1px solid #999; border-left: 0; margin-left: 1px; background: #fff; }
.grip button { margin-right: 2px; }
.mhead { display: flex; justify-content: space-between; align-items: center; height: 21px; background: #ababab; padding: 0 3px 0 8px; color: #fff; font-weight: 700; }
.mname { display: flex; align-items: center; gap: 4px; }
.mname i { width: 8px; height: 4px; background: #fff; clip-path: polygon(0 0, 100% 0, 50% 100%); }
.help { width: 14px; height: 14px; line-height: 12px; border: 1px solid #000; border-radius: 2px; background: #ffffbf; color: #00007c; }
.mtools { display: flex; align-items: center; height: 27px; padding: 0 0 4px 3px; }
.mtools .find { margin-left: 6px; padding-left: 9px; height: 17px; border-left: 1px solid #888; }
.tree { flex: 1; border: 1px solid #646464; background: #fff; font-size: 11px; color: #000; }
.tree ul { list-style: none; margin: 0; padding: 0 0 0 5px; background: #f0f0f0; }
.tree li { display: flex; align-items: center; gap: 2px; height: 18px; line-height: 16px; padding-bottom: 2px; }
.tree .sub { position: relative; padding-left: 19px; }
.tree .sub::before { content: ""; position: absolute; left: 3px; top: 0; width: 11px; height: 9px; border-left: 1px solid #888; border-bottom: 1px solid #888; }
.tree .sub:not(.last)::after { content: ""; position: absolute; left: 3px; top: 9px; height: 9px; border-left: 1px solid #888; }
.ex { position: absolute; z-index: 1; left: -1px; top: 4px; width: 9px; height: 9px; border: 1px solid #777; background: linear-gradient(#000, #000) center / 5px 1px no-repeat, linear-gradient(#000, #000) center / 1px 5px no-repeat, #fff; }
.dim { color: #777; }

/* graphics area */
.view { position: relative; background: linear-gradient(#303030, #a3a3a3); border-right: 2px solid #e4e4e4; overflow: hidden; }
.scene { position: absolute; inset: 0; width: 100%; height: 100%; }
.dimtext { font: 12px "Open Sans", sans-serif; text-anchor: middle; }
.docbtns { position: absolute; top: 7px; right: 2px; display: flex; gap: 8px; }
.cube { position: absolute; top: 53px; right: 27px; width: 43px; height: 42px; border: 1px solid #777; background: #929292; padding: 7px; color: #5c5e62; font-size: 10px; font-weight: 700; }
.cube span { display: block; background: #898989; line-height: 26px; }
.navbar { position: absolute; top: 121px; right: 1px; border: 2px solid #444; border-radius: 5px; background: #868686; }
.dialog { position: absolute; left: 235px; top: 307px; width: 190px; border: 1px solid #bbb; background: #fbfbfb; padding: 0 6px 6px; }
.dtitle { display: flex; justify-content: space-between; align-items: flex-start; height: 29px; padding-left: 8px; font-size: 14px; line-height: 29px; white-space: nowrap; color: #222; }
.dclose { width: 31px; height: 20px; background: #c75050; display: grid; place-items: center; }
.dbody { display: flex; align-items: center; gap: 6px; height: 26px; border: 1px solid #d8d8d8; background: #f0f0f0; padding: 0 1px 0 2px; }
.field { flex: 1; min-width: 0; display: flex; height: 21px; border: 1px solid #569de5; background: #fff; }
.field input { flex: 1; min-width: 0; border: 0; padding: 0 5px; font: 11px "Open Sans", sans-serif; color: #fff; background: linear-gradient(#e07a20, #e07a20) 46px 3px / 1px 13px no-repeat, linear-gradient(#3399ff, #3399ff) 5px 3px / 41px 13px no-repeat, #fff; outline: 0; }
.field button { width: 17px; background: #f2f2f2; display: grid; place-items: center; }
.ok { flex: none; width: 22px; height: 19px; border: 1px solid #999; background: #eee; display: grid; place-items: center; }

/* status bar */
.status { display: flex; align-items: stretch; height: 27px; border-top: 2px solid #aaa; padding: 2px 0 0 1px; background: linear-gradient(#fff, #b9b9b9); font-size: 11px; line-height: 24px; color: #111; }
.hint { flex: 1; max-width: 448px; }
.sicons { flex: 1; display: flex; align-items: center; gap: 7px; padding-left: 5px; border-left: 1px solid #bbb; }
.sicons button { display: flex; align-items: center; gap: 2px; }
.status .coords, .status .state, .status .one { padding: 0 4px; border-left: 1px solid #bbb; white-space: nowrap; }
.status .coords { flex: 0 0 118px; }
.status .state { flex: 0 0 100px; }
.status .one { flex: 0 0 39px; padding-left: 8px; color: #312030; }

/* taskbar */
.taskbar { display: flex; height: 40px; background: linear-gradient(#5b5b5b, #666); }
.start { width: 52px; padding-left: 11px; }
.tasks { display: flex; gap: 4px; padding: 1px 0; flex: 1; }
.task { width: 58px; display: grid; place-items: center; border: 1px solid transparent; }
.run { background: #808080; border-color: #a5a5a5; }
.active { background: #a0a0a0; border-color: #eee; }
.sk { font: bold 24px "Open Sans", sans-serif; fill: #fff; text-anchor: middle; }
.tray { display: flex; align-items: center; gap: 8px; padding-right: 18px; color: #fff; }
.clock { text-align: center; font-size: 11px; line-height: 17px; width: 61px; margin-left: 8px; }
```
